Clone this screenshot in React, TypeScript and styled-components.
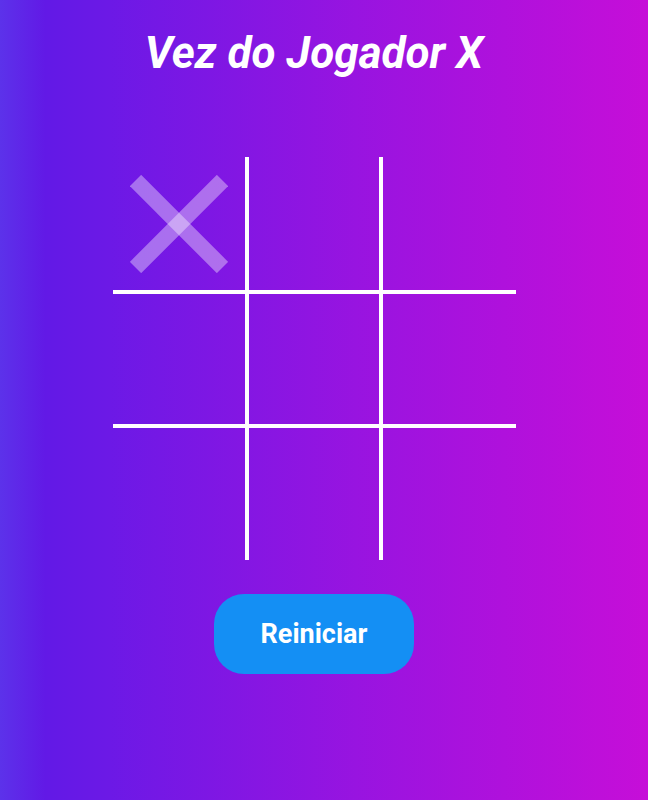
import React from "react";
import styled, { createGlobalStyle } from "styled-components";

const GlobalStyle = createGlobalStyle`
  html, body {
    margin: 0;
    padding: 0;
    background: #ffffff;
  }
  body {
    font-family: Roboto, "Liberation Sans", sans-serif;
  }
`;

const Page = styled.main`
  box-sizing: border-box;
  width: calc(100% - 2px);
  min-height: 100vh;
  background: linear-gradient(
    90deg,
    #5c32ea 0%,
    #6219e6 7%,
    #6c19e6 17%,
    #9814e0 55%,
    #c60ed8 100%
  );
  display: flex;
  flex-direction: column;
  align-items: center;
  padding: 27px 20px 0 0;
`;

const Title = styled.h1`
  margin: 0 0 78px;
  font-family: Roboto, "Liberation Sans", sans-serif;
  font-size: 44px;
  font-weight: 700;
  font-style: italic;
  line-height: normal;
  color: #ffffff;
`;

const Board = styled.div`
  display: grid;
  grid-template-columns: 136px 134px 133px;
  grid-template-rows: 137px 134px 132px;
`;

const Cell = styled.button<{ $right: boolean; $bottom: boolean }>`
  box-sizing: border-box;
  margin: 0;
  padding: 0;
  background: transparent;
  border: none;
  border-right: ${(p) => (p.$right ? "4px solid #ffffff" : "none")};
  border-bottom: ${(p) => (p.$bottom ? "4px solid #ffffff" : "none")};
  display: flex;
  align-items: center;
  justify-content: center;
  cursor: pointer;
`;

const MarkSvg = styled.svg`
  width: 98px;
  height: 98px;
  display: block;
`;

const ResetButton = styled.button`
  margin-top: 34px;
  width: 200px;
  height: 80px;
  border: none;
  border-radius: 30px;
  background: #148ff4;
  color: #ffffff;
  font-family: Roboto, "Liberation Sans", sans-serif;
  font-size: 27px;
  font-weight: 700;
  cursor: pointer;
`;

const PreviewX: React.FC = () => (
  <MarkSvg viewBox="0 0 98 98" aria-hidden="true">
    <line x1="5.5" y1="5.5" x2="92.5" y2="92.5" stroke="#ffffff" strokeOpacity="0.38" strokeWidth="16" />
    <line x1="92.5" y1="5.5" x2="5.5" y2="92.5" stroke="#ffffff" strokeOpacity="0.38" strokeWidth="16" />
  </MarkSvg>
);

export default function App() {
  const cells = Array.from({ length: 9 }, (_, i) => i);
  return (
    <>
      <GlobalStyle />
      <Page>
        <Title>Vez do Jogador X</Title>
        <Board>
          {cells.map((i) => (
            <Cell key={i} $right={i % 3 !== 2} $bottom={i < 6}>
              {i === 0 && <PreviewX />}
            </Cell>
          ))}
        </Board>
        <ResetButton>Reiniciar</ResetButton>
      </Page>
    </>
  );
}
